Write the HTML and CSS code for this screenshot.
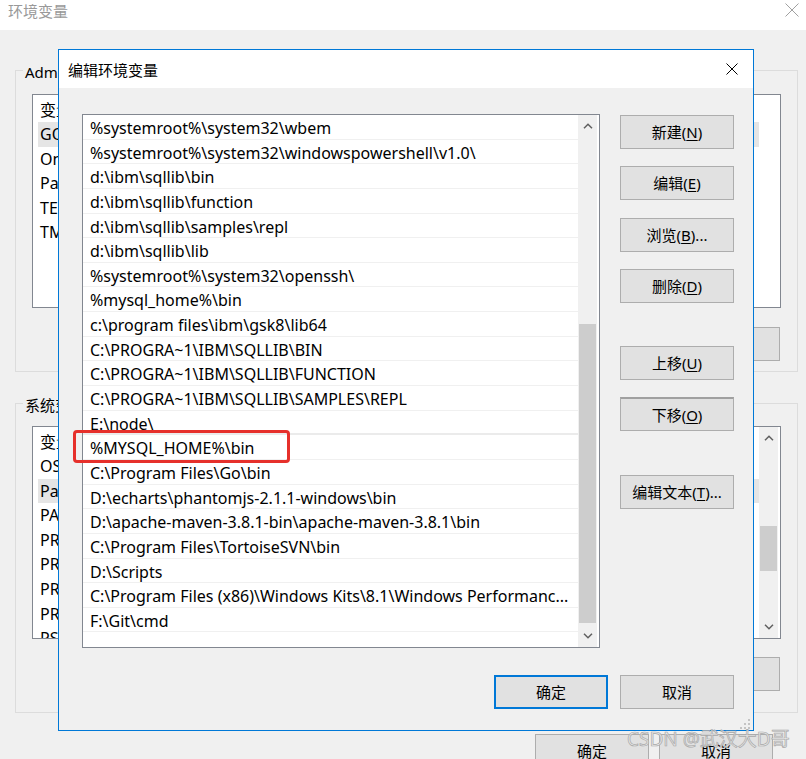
FILE: index.html
```html
<!DOCTYPE html>
<html lang="zh-CN">
<head>
<meta charset="utf-8">
<title>环境变量</title>
<link rel="stylesheet" href="styles.css">
</head>
<body>
<div class="win">
  <div class="win-title">
    <span class="win-title-text">环境变量</span>
    <svg class="win-close" width="14" height="14" viewBox="0 0 14 14"><path d="M0.5 0.5L13.5 13.5M13.5 0.5L0.5 13.5" stroke="#a0a0a0" stroke-width="1" fill="none"/></svg>
  </div>
  <div class="win-body">
    <div class="group g-user">
      <div class="group-label">Administrator 的用户变量</div>
      <div class="blist">
        <div class="blist-rows">
          <div class="bhead">变量</div>
          <div class="brow sel">GOPATH</div>
          <div class="brow">OneDrive</div>
          <div class="brow">Path</div>
          <div class="brow">TEMP</div>
          <div class="brow">TMP</div>
        </div>
      </div>
      <div class="bbtns">
        <button class="btn">新建(<u>N</u>)...</button>
        <button class="btn">编辑(<u>E</u>)...</button>
        <button class="btn">删除(<u>D</u>)</button>
      </div>
    </div>
    <div class="group g-sys">
      <div class="group-label">系统变量(<u>S</u>)</div>
      <div class="blist">
        <div class="blist-rows">
          <div class="bhead">变量</div>
          <div class="brow">OS</div>
          <div class="brow sel">Path</div>
          <div class="brow">PATHEXT</div>
          <div class="brow">PROCESSOR_ARCHITECTURE</div>
          <div class="brow">PROCESSOR_IDENTIFIER</div>
          <div class="brow">PROCESSOR_LEVEL</div>
          <div class="brow">PROCESSOR_REVISION</div>
          <div class="brow">PSModulePath</div>
        </div>
        <div class="bscroll">
          <div class="sc-btn"><svg width="10" height="6" viewBox="0 0 10 6"><polyline points="1,5.2 5,1.2 9,5.2" fill="none" stroke="#606060" stroke-width="1.5"/></svg></div>
          <div class="sc-track"><div class="sc-thumb bthumb"></div></div>
          <div class="sc-btn"><svg width="10" height="6" viewBox="0 0 10 6"><polyline points="1,0.8 5,4.8 9,0.8" fill="none" stroke="#606060" stroke-width="1.5"/></svg></div>
        </div>
      </div>
      <div class="bbtns">
        <button class="btn">新建(<u>W</u>)...</button>
        <button class="btn">编辑(<u>I</u>)...</button>
        <button class="btn">删除(<u>L</u>)</button>
      </div>
    </div>
    <div class="win-foot">
      <button class="btn">确定</button>
      <button class="btn">取消</button>
    </div>
  </div>
</div>

<div class="dialog">
  <div class="dlg-title">
    <span class="dlg-title-text">编辑环境变量</span>
    <svg class="dlg-close" width="12" height="12" viewBox="0 0 12 12"><path d="M0.5 0.5L11.5 11.5M11.5 0.5L0.5 11.5" stroke="#000" stroke-width="1" fill="none"/></svg>
  </div>
  <div class="dlg-body">
    <div class="plist">
      <div class="prows">
        <div class="prow">%systemroot%\system32\wbem</div>
        <div class="prow">%systemroot%\system32\windowspowershell\v1.0\</div>
        <div class="prow">d:\ibm\sqllib\bin</div>
        <div class="prow">d:\ibm\sqllib\function</div>
        <div class="prow">d:\ibm\sqllib\samples\repl</div>
        <div class="prow">d:\ibm\sqllib\lib</div>
        <div class="prow">%systemroot%\system32\openssh\</div>
        <div class="prow">%mysql_home%\bin</div>
        <div class="prow">c:\program files\ibm\gsk8\lib64</div>
        <div class="prow">C:\PROGRA~1\IBM\SQLLIB\BIN</div>
        <div class="prow">C:\PROGRA~1\IBM\SQLLIB\FUNCTION</div>
        <div class="prow">C:\PROGRA~1\IBM\SQLLIB\SAMPLES\REPL</div>
        <div class="prow thick">E:\node\</div>
        <div class="prow">%MYSQL_HOME%\bin<span class="hl"></span></div>
        <div class="prow">C:\Program Files\Go\bin</div>
        <div class="prow">D:\echarts\phantomjs-2.1.1-windows\bin</div>
        <div class="prow">D:\apache-maven-3.8.1-bin\apache-maven-3.8.1\bin</div>
        <div class="prow">C:\Program Files\TortoiseSVN\bin</div>
        <div class="prow">D:\Scripts</div>
        <div class="prow">C:\Program Files (x86)\Windows Kits\8.1\Windows Performanc...</div>
        <div class="prow">F:\Git\cmd</div>
      </div>
      <div class="pscroll">
        <div class="sc-btn"><svg width="10" height="6" viewBox="0 0 10 6"><polyline points="1,5.2 5,1.2 9,5.2" fill="none" stroke="#606060" stroke-width="1.5"/></svg></div>
        <div class="sc-track"><div class="sc-thumb pthumb"></div></div>
        <div class="sc-btn"><svg width="10" height="6" viewBox="0 0 10 6"><polyline points="1,0.8 5,4.8 9,0.8" fill="none" stroke="#606060" stroke-width="1.5"/></svg></div>
      </div>
    </div>
    <div class="pbtns">
      <button class="btn b1">新建(<u>N</u>)</button>
      <button class="btn b2">编辑(<u>E</u>)</button>
      <button class="btn b3">浏览(<u>B</u>)...</button>
      <button class="btn b4">删除(<u>D</u>)</button>
      <button class="btn b5">上移(<u>U</u>)</button>
      <button class="btn b6 hover">下移(<u>O</u>)</button>
      <button class="btn b7">编辑文本(<u>T</u>)...</button>
    </div>
    <div class="dlg-foot">
      <button class="btn default">确定</button>
      <button class="btn">取消</button>
    </div>
  </div>
  <svg class="grip" width="10" height="10" viewBox="0 0 10 10">
    <rect x="8" y="0" width="2" height="2" fill="#c4c4c4"/>
    <rect x="4" y="4" width="2" height="2" fill="#c4c4c4"/>
    <rect x="8" y="4" width="2" height="2" fill="#c4c4c4"/>
    <rect x="0" y="8" width="2" height="2" fill="#c4c4c4"/>
    <rect x="4" y="8" width="2" height="2" fill="#c4c4c4"/>
    <rect x="8" y="8" width="2" height="2" fill="#c4c4c4"/>
  </svg>
</div>

<div class="watermark">CSDN @武汉大D哥</div>
</body>
</html>
```

FILE: styles.css
```css
* { box-sizing: border-box; }
html, body { margin: 0; padding: 0; }
body {
  width: 806px;
  height: 759px;
  overflow: hidden;
  position: relative;
  background: #f0f0f0;
  font-family: "Noto Sans", "Noto Sans CJK SC", sans-serif;
  color: #000;
}

/* background window */
.win-title {
  height: 30px;
  background: #fff;
  display: flex;
  justify-content: space-between;
  align-items: flex-start;
  padding-left: 8px;
}
.win-title-text { font-size: 15px; line-height: 22px; color: #999; }
.win-close { margin: 3px 7px 0 0; }

.win-body { padding-top: 40px; }

.group {
  margin: 0 8px 0 15px;
  border: 1px solid #dcdcdc;
  padding: 0 16px 10px 16px;
}
.g-sys { margin-top: 31px; padding-bottom: 21px; }
.group-label {
  width: max-content;
  margin: -9px 0 0 -9px;
  padding: 0 2px;
  background: #f0f0f0;
  font-size: 15px;
  line-height: 20px;
}
.group-label u { text-decoration: none; }

.blist {
  margin-top: 12px;
  height: 214px;
  border: 1px solid #828790;
  background: #fff;
  display: flex;
  overflow: hidden;
}
.g-sys .blist { margin-top: 11px; height: 213px; }
.blist-rows { flex: 1; padding: 0 21px 0 5px; overflow: hidden; }
.g-sys .blist-rows { padding-right: 0; }
.bhead { height: 27px; padding: 4px 0 0 2px; font-size: 16px; line-height: 22px; }
.brow { height: 24.6px; padding-left: 2px; font-size: 16px; line-height: 24.6px; white-space: nowrap; }
.brow.sel { background: #e5e5e5; }

.bscroll {
  width: 19px;
  margin-right: 2px;
  background: #f0f0f0;
  display: flex;
  flex-direction: column;
}
.sc-btn { height: 22px; display: flex; align-items: center; justify-content: center; flex: none; }
.sc-track { flex: 1; }
.sc-thumb { background: #cdcdcd; margin: 0 1px; }
.bthumb { margin-top: 77px; height: 45px; }

.bbtns {
  margin-top: 19px;
  margin-right: 1px;
  display: flex;
  justify-content: flex-end;
  gap: 10px;
}
.g-sys .bbtns { margin-top: 18px; }

.btn {
  width: 114px;
  height: 34px;
  border: 1px solid #adadad;
  background: #e1e1e1;
  font-family: "Noto Sans", "Noto Sans CJK SC", sans-serif;
  font-size: 15px;
  line-height: 30px;
  color: #000;
  padding: 0;
  margin: 0;
  text-align: center;
}
.btn u { text-decoration: underline; text-underline-offset: 2px; }

.win-foot {
  margin-top: 21px;
  padding-right: 33px;
  display: flex;
  justify-content: flex-end;
  gap: 10px;
}

/* dialog */
.dialog {
  position: absolute;
  left: 58px;
  top: 49px;
  width: 696px;
  height: 682px;
  border: 1px solid #0078d7;
  background: #f0f0f0;
}
.dlg-title {
  height: 38px;
  background: #fff;
  display: flex;
  align-items: center;
  justify-content: space-between;
  padding: 2px 15px 0 9px;
}
.dlg-title-text { font-size: 15px; line-height: 20px; }
.dlg-close { margin-top: -2px; }

.dlg-body {
  padding: 26px 19px 0 23px;
  display: grid;
  grid-template-columns: 518px 114px;
  column-gap: 20px;
}
.plist {
  height: 534px;
  border: 1px solid #828790;
  background: #fff;
  display: flex;
}
.prows { flex: 1; }
.prow {
  position: relative;
  height: 24.65px;
  border-bottom: 1px solid #f0f0f0;
  padding: 2px 0 0 7px;
  font-size: 16px;
  line-height: 23px;
  white-space: nowrap;
}
.prow.thick { border-bottom: 2px solid #ebebeb; }
.hl {
  position: absolute;
  left: -10px;
  top: -5px;
  width: 217px;
  height: 33px;
  border: 3px solid #e6302b;
  border-radius: 4px;
}
.pscroll {
  width: 19px;
  margin-right: 2px;
  background: #f0f0f0;
  display: flex;
  flex-direction: column;
}
.pthumb { margin-top: 187px; height: 299px; }

.pbtns { display: flex; flex-direction: column; }
.b1 { margin-top: 1px; }
.b2 { margin-top: 17px; }
.b3 { margin-top: 18px; }
.b4 { margin-top: 17px; }
.b5 { margin-top: 43px; }
.b6 { margin-top: 17px; }
.b7 { margin-top: 44px; }
.btn.hover { border-top: 2px solid #a0a0a0; }

.dlg-foot {
  grid-column: 1 / -1;
  margin-top: 27px;
  display: flex;
  justify-content: flex-end;
  gap: 12px;
}
.btn.default { border: 2px solid #0078d7; }

.grip { position: absolute; right: 3px; bottom: 1px; }

.watermark {
  position: absolute;
  left: 627px;
  top: 727px;
  font-size: 19px;
  line-height: 24px;
  color: rgba(235, 235, 235, 0.85);
  -webkit-text-stroke: 0.7px #a8a8a8;
  white-space: nowrap;
}
```
